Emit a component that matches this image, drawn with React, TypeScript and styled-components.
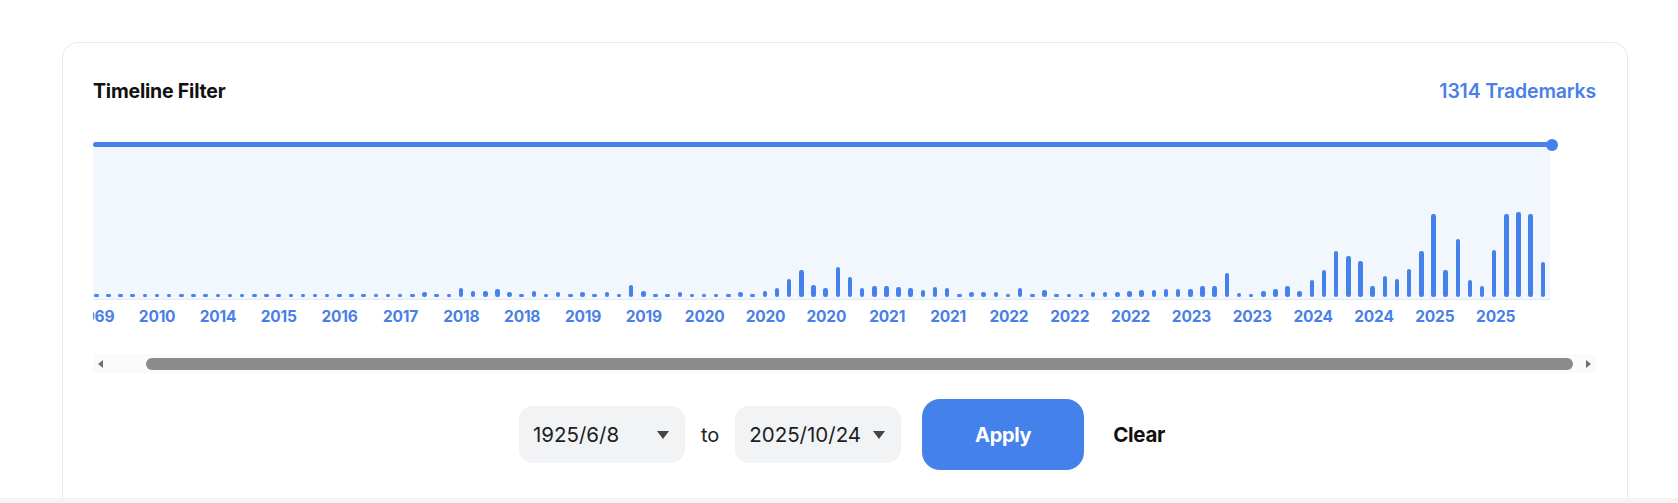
import React from 'react';
import styled, { createGlobalStyle } from 'styled-components';

const GlobalStyle = createGlobalStyle`
  html, body {
    margin: 0;
    padding: 0;
    background: #ffffff;
  }
  body {
    font-family: Inter, "Noto Sans", "Liberation Sans", sans-serif;
    color: #111;
  }
`;

const BLUE = '#4481ea';

// bar heights in px, one per month slot
const barHeights: number[] = [
  3, 3, 3, 3, 3, 3, 3, 3, 3, 3, 3, 3, 3, 3, 3, 3, 3, 3, 3, 3,
  3, 3, 3, 3, 3, 3, 3, 5, 3, 3, 9, 6, 6, 8, 5, 3, 6, 3, 5, 3,
  5, 3, 5, 3, 12, 6, 3, 3, 5, 3, 3, 3, 3, 5, 3, 6, 9, 18, 27, 12,
  9, 30, 20, 9, 11, 11, 10, 9, 7, 10, 9, 3, 5, 5, 5, 3, 9, 3, 7, 3,
  3, 3, 5, 5, 5, 6, 7, 7, 8, 8, 8, 11, 11, 24, 4, 3, 6, 8, 11, 6,
  17, 27, 46, 41, 36, 11, 21, 18, 28, 46, 83, 27, 58, 17, 11, 47, 83, 85, 83, 35,
];

const axisLabels = [
  '1969', '2010', '2014', '2015', '2016', '2017', '2018', '2018',
  '2019', '2019', '2020', '2020', '2020', '2021', '2021', '2022',
  '2022', '2022', '2023', '2023', '2024', '2024', '2025', '2025',
];

const SLOT = 12.17;

const Page = styled.div`
  padding: 42px 50px 0 62px;
  display: flex;
  flex-direction: column;
  height: 503px;
  box-sizing: border-box;
  overflow: hidden;
`;

const Card = styled.section`
  flex-shrink: 0;
  background: #fff;
  border: 1px solid #e9eaee;
  border-bottom: none;
  border-radius: 16px 16px 0 0;
  padding: 36px 31px 0 30px;
  height: 456px;
  box-sizing: border-box;
  display: flex;
  flex-direction: column;
`;

const BottomStrip = styled.div`
  height: 10px;
  margin: 0 -50px 0 -62px;
  background: #f4f4f6;
  flex-shrink: 0;
`;

const Header = styled.div`
  display: flex;
  justify-content: space-between;
  align-items: center;
  height: 24px;
`;

const Title = styled.h2`
  margin: 0;
  font-size: 19.5px;
  font-weight: 700;
  color: #111;
  letter-spacing: -0.2px;
`;

const Count = styled.span`
  font-size: 19.5px;
  font-weight: 600;
  color: #4a7fe7;
  letter-spacing: -0.2px;
`;

const Timeline = styled.div`
  margin-top: 39px;
  width: 1459px;
`;

const RangeLine = styled.div`
  position: relative;
  height: 5px;
  background: ${BLUE};
  border-radius: 3px 0 0 3px;
`;

const RangeHandle = styled.span`
  position: absolute;
  right: -6px;
  top: -3.5px;
  width: 12px;
  height: 12px;
  border-radius: 50%;
  background: ${BLUE};
`;

const ChartArea = styled.div`
  width: 1457px;
  height: 153px;
  box-sizing: border-box;
  background: #f2f7fe;
  border-bottom: 1px solid #e4e9f1;
  padding: 0 0 2px 1px;
  overflow: hidden;
  display: grid;
  grid-template-columns: repeat(120, ${SLOT}px);
  align-items: end;
`;

const Bar = styled.div<{ $h: number }>`
  width: 4.5px;
  height: ${p => p.$h}px;
  background: ${BLUE};
  border-radius: 2.25px;
  justify-self: start;
`;

const AxisClip = styled.div`
  overflow: hidden;
  margin-top: 7px;
  height: 20px;
`;

const AxisRow = styled.div`
  display: grid;
  grid-template-columns: repeat(24, ${SLOT * 5}px);
  margin-left: ${1 + 2.25 - (SLOT * 5) / 2}px;
`;

const AxisLabel = styled.span`
  text-align: center;
  font-size: 15.5px;
  line-height: 20px;
  font-weight: 700;
  color: #4a7fe7;
  letter-spacing: -0.2px;
`;

const ScrollBar = styled.div`
  margin-top: 27px;
  height: 19px;
  display: flex;
  align-items: center;
  background: #fafafa;
`;

const ScrollArrow = styled.div<{ $dir: 'left' | 'right' }>`
  width: 15px;
  height: 19px;
  display: flex;
  align-items: center;
  justify-content: center;
  &::before {
    content: '';
    width: 0;
    height: 0;
    border-top: 4px solid transparent;
    border-bottom: 4px solid transparent;
    ${p => (p.$dir === 'left' ? 'border-right: 5px solid #6f6f6f;' : 'border-left: 5px solid #6f6f6f;')}
  }
`;

const ScrollTrack = styled.div`
  flex: 1;
  display: flex;
  align-items: center;
  padding: 0 8px 0 38px;
`;

const ScrollThumb = styled.div`
  flex: 1;
  height: 12px;
  border-radius: 6px;
  background: #8b8b8b;
`;

const Controls = styled.div`
  margin-top: 26px;
  display: flex;
  align-items: center;
  justify-content: center;
  gap: 16px;
  padding-left: 8px;
`;

const DateSelect = styled.div`
  width: 166px;
  height: 57px;
  box-sizing: border-box;
  padding: 0 16px 0 14px;
  border-radius: 14px;
  background: #f2f3f5;
  display: flex;
  align-items: center;
  justify-content: space-between;
  font-size: 20.5px;
  color: #1d1d1d;
`;

const Caret = styled.span`
  width: 0;
  height: 0;
  border-left: 6px solid transparent;
  border-right: 6px solid transparent;
  border-top: 8px solid #444;
`;

const ToText = styled.span`
  font-size: 20px;
  color: #222;
`;

const ApplyButton = styled.button`
  width: 162px;
  height: 71px;
  margin-left: 5px;
  border: none;
  border-radius: 18px;
  background: #4481ea;
  color: #fff;
  font-family: inherit;
  font-size: 20px;
  font-weight: 700;
  letter-spacing: -0.3px;
`;

const ClearButton = styled.button`
  border: none;
  background: none;
  padding: 0 13px;
  font-family: inherit;
  font-size: 20.5px;
  font-weight: 700;
  color: #111;
  letter-spacing: -0.3px;
`;

const App: React.FC = () => {
  return (
    <>
      <GlobalStyle />
      <Page>
        <Card>
          <Header>
            <Title>Timeline Filter</Title>
            <Count>1314 Trademarks</Count>
          </Header>
          <Timeline>
            <RangeLine>
              <RangeHandle />
            </RangeLine>
            <ChartArea>
              {barHeights.map((h, i) => (
                <Bar key={i} $h={h} />
              ))}
            </ChartArea>
          </Timeline>
          <AxisClip>
            <AxisRow>
              {axisLabels.map((l, i) => (
                <AxisLabel key={i}>{l}</AxisLabel>
              ))}
            </AxisRow>
          </AxisClip>
          <ScrollBar>
            <ScrollArrow $dir="left" />
            <ScrollTrack>
              <ScrollThumb />
            </ScrollTrack>
            <ScrollArrow $dir="right" />
          </ScrollBar>
          <Controls>
            <DateSelect>
              1925/6/8
              <Caret />
            </DateSelect>
            <ToText>to</ToText>
            <DateSelect>
              2025/10/24
              <Caret />
            </DateSelect>
            <ApplyButton>Apply</ApplyButton>
            <ClearButton>Clear</ClearButton>
          </Controls>
        </Card>
        <BottomStrip />
      </Page>
    </>
  );
};

export default App;
